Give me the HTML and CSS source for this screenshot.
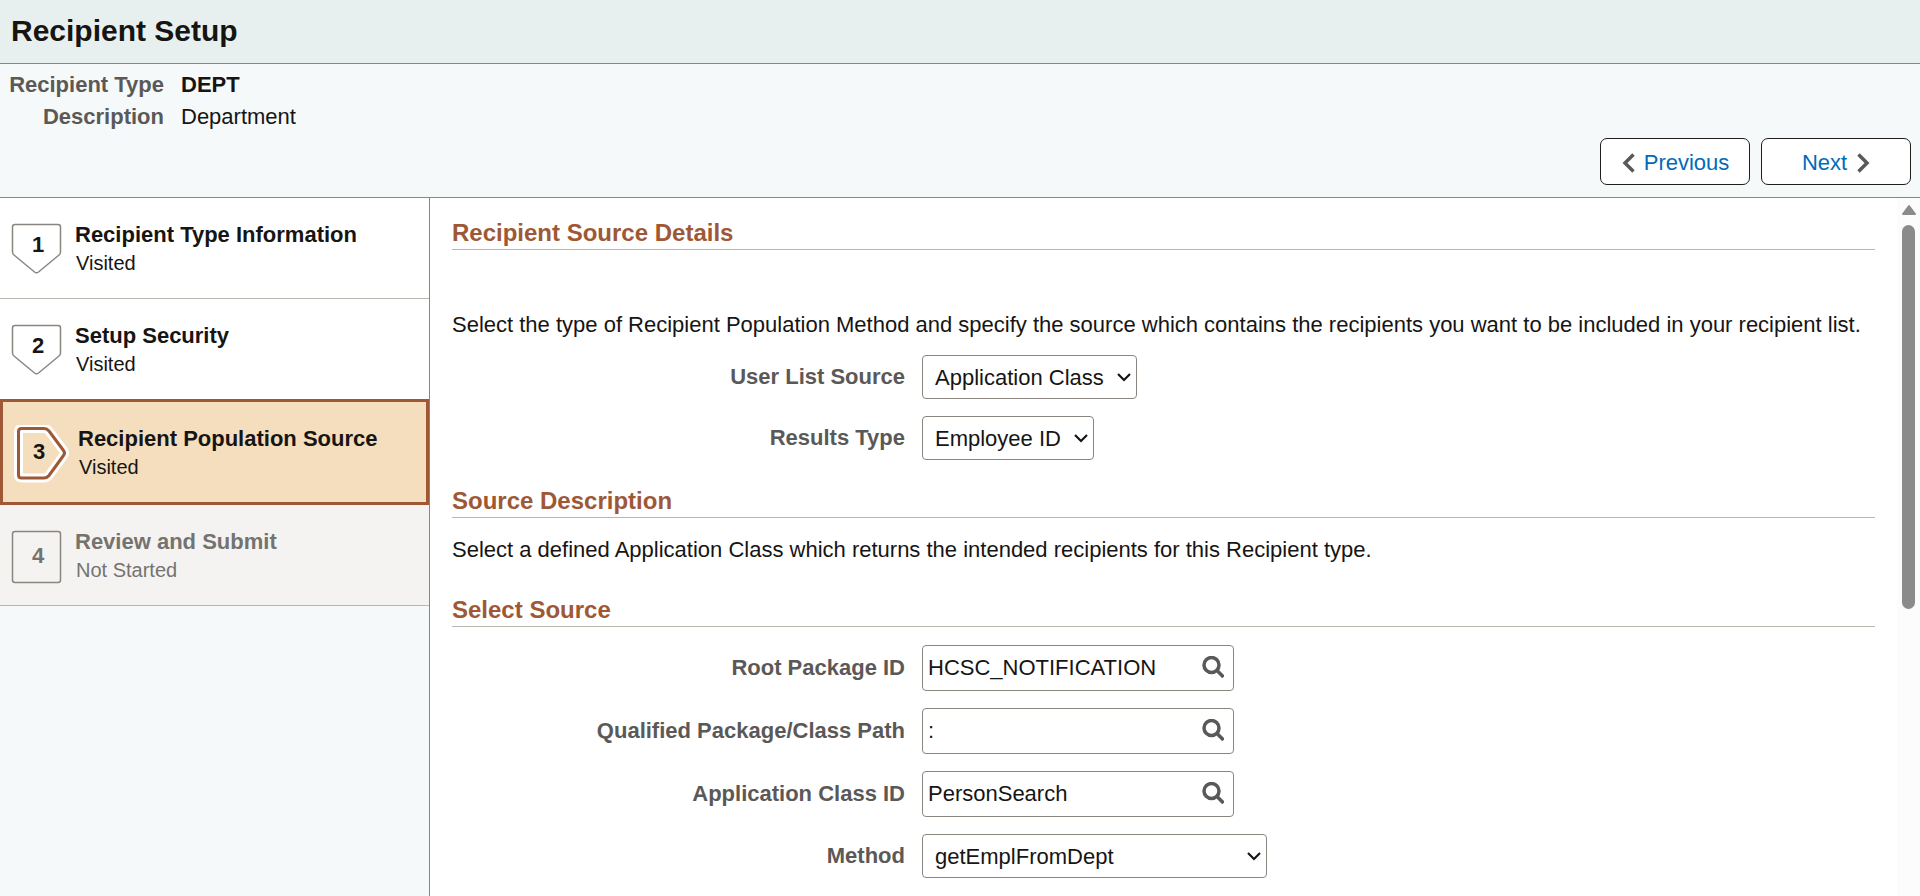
FILE: index.html
```html
<!DOCTYPE html>
<html lang="en">
<head>
    <meta charset="UTF-8">
    <meta name="viewport" content="width=device-width, initial-scale=1.0">
    <title>Recipient Setup</title>
    <link rel="stylesheet" href="styles.css">
</head>
<body>
    <header class="page-header">
        <h1>Recipient Setup</h1>
    </header>

    <section class="summary">
        <dl class="summary-list">
            <dt>Recipient Type</dt>
            <dd class="strong">DEPT</dd>
            <dt>Description</dt>
            <dd>Department</dd>
        </dl>
        <div class="nav-buttons">
            <button type="button" class="nav-button">
                <svg width="14" height="20" viewBox="0 0 14 20"><path d="M12.500 1.500L4 10l8.500 8.500"/></svg>
                Previous
            </button>
            <button type="button" class="nav-button">
                Next
                <svg width="14" height="20" viewBox="0 0 14 20"><path d="M2.500 1.500L11 10l-8.500 8.500"/></svg>
            </button>
        </div>
    </section>

    <div class="content">
        <!-- Steps -->
        <nav class="steps">
            <a href="#" class="step">
                <svg class="badge" width="60" height="60" viewBox="0 0 60 60">
                    <path d="M6 3.500H49a2.500 2.500 0 0 1 2.500 2.500V31q0 2-1.500 3L29.500 51q-2 1.500-4 0L5 34q-1.500-1-1.500-3V6A2.500 2.500 0 0 1 6 3.500z"/>
                    <text x="29" y="31">1</text>
                </svg>
                <span class="step-text">
                    <span class="step-title">Recipient Type Information</span>
                    <span class="step-status">Visited</span>
                </span>
            </a>
            <a href="#" class="step">
                <svg class="badge" width="60" height="60" viewBox="0 0 60 60">
                    <path d="M6 3.500H49a2.500 2.500 0 0 1 2.500 2.500V31q0 2-1.500 3L29.500 51q-2 1.500-4 0L5 34q-1.500-1-1.500-3V6A2.500 2.500 0 0 1 6 3.500z"/>
                    <text x="29" y="31">2</text>
                </svg>
                <span class="step-text">
                    <span class="step-title">Setup Security</span>
                    <span class="step-status">Visited</span>
                </span>
            </a>
            <a href="#" class="step active" aria-current="step">
                <svg class="badge" width="60" height="60" viewBox="0 0 60 60">
                    <path class="halo" d="M9.500 3.500H32q3 0 5 2.500L51.500 25.500q2 2.500 0 5L37 50.500q-2 2.500-5 2.500H9.500q-3 0-3-3V6.500q0-3 3-3z"/>
                    <path d="M9.500 3.500H32q3 0 5 2.500L51.500 25.500q2 2.500 0 5L37 50.500q-2 2.500-5 2.500H9.500q-3 0-3-3V6.500q0-3 3-3z"/>
                    <text x="27" y="34">3</text>
                </svg>
                <span class="step-text">
                    <span class="step-title">Recipient Population Source</span>
                    <span class="step-status">Visited</span>
                </span>
            </a>
            <a href="#" class="step pending">
                <svg class="badge" width="60" height="60" viewBox="0 0 60 60">
                    <rect x="3.500" y="3.500" width="48" height="51" rx="2.500"/>
                    <text x="29" y="35">4</text>
                </svg>
                <span class="step-text">
                    <span class="step-title">Review and Submit</span>
                    <span class="step-status">Not Started</span>
                </span>
            </a>
        </nav>

        <!-- Form -->
        <main class="details">
            <h2>Recipient Source Details</h2>
            <p class="intro">Select the type of Recipient Population Method and specify the source which contains the recipients you want to be included in your recipient list.</p>
            <div class="row">
                <label for="list-source">User List Source</label>
                <select id="list-source" class="w-class">
                    <option>Application Class</option>
                </select>
            </div>
            <div class="row">
                <label for="results-type">Results Type</label>
                <select id="results-type" class="w-type">
                    <option>Employee ID</option>
                </select>
            </div>

            <h2>Source Description</h2>
            <p>Select a defined Application Class which returns the intended recipients for this Recipient type.</p>

            <h2>Select Source</h2>
            <div class="row">
                <label for="root-package">Root Package ID</label>
                <div class="lookup">
                    <input type="text" id="root-package" value="HCSC_NOTIFICATION">
                    <button type="button" aria-label="Look up Root Package ID">
                        <svg width="22" height="22" viewBox="0 0 22 22"><circle cx="9.500" cy="9" r="7.500"/><path d="M14.500 14l7 7"/></svg>
                    </button>
                </div>
            </div>
            <div class="row">
                <label for="class-path">Qualified Package/Class Path</label>
                <div class="lookup">
                    <input type="text" id="class-path" value=":">
                    <button type="button" aria-label="Look up Class Path">
                        <svg width="22" height="22" viewBox="0 0 22 22"><circle cx="9.500" cy="9" r="7.500"/><path d="M14.500 14l7 7"/></svg>
                    </button>
                </div>
            </div>
            <div class="row">
                <label for="class-id">Application Class ID</label>
                <div class="lookup">
                    <input type="text" id="class-id" value="PersonSearch">
                    <button type="button" aria-label="Look up Application Class ID">
                        <svg width="22" height="22" viewBox="0 0 22 22"><circle cx="9.500" cy="9" r="7.500"/><path d="M14.500 14l7 7"/></svg>
                    </button>
                </div>
            </div>
            <div class="row">
                <label for="method">Method</label>
                <select id="method" class="w-method">
                    <option>getEmplFromDept</option>
                </select>
            </div>
        </main>

        <div class="scrollbar" aria-hidden="true">
            <svg width="16" height="27" viewBox="0 0 16 27"><path d="M8 8L14 16H2z"/></svg>
            <div class="thumb"></div>
        </div>
    </div>
</body>
</html>
```
FILE: styles.css
```css
* {
    box-sizing: border-box;
}
body {
    margin: 0;
    height: 100vh;
    display: flex;
    flex-direction: column;
    overflow: hidden;
    font-family: Arial, "Liberation Sans", sans-serif;
    font-size: 22px;
    line-height: 28px;
    color: #161513;
    background: #f5f9fa;
}
input, select, button {
    font: inherit;
    color: inherit;
}
.page-header {
    padding: 13px 11px 14px;
    background: #e7f0ef;
    border-bottom: 1px solid #8b8580;
}
h1 {
    margin: 0;
    font-size: 30px;
    line-height: 36px;
}

/* Summary */
.summary {
    padding: 5px 9px 12px;
    border-bottom: 1px solid #8b8580;
}
.summary-list {
    display: grid;
    grid-template-columns: 155px 1fr;
    column-gap: 17px;
    margin: 0;
    line-height: 32px;
}
.summary-list dt {
    text-align: right;
    font-weight: bold;
    color: #5b5957;
}
.summary-list dd {
    margin: 0;
}
.summary-list .strong {
    font-weight: bold;
}
.nav-buttons {
    display: flex;
    justify-content: flex-end;
    gap: 11px;
    margin-top: 5px;
}
.nav-button {
    display: flex;
    align-items: center;
    justify-content: center;
    gap: 9px;
    width: 150px;
    height: 47px;
    padding: 2px 0 0;
    color: #006bb8;
    background: #fff;
    border: 1px solid #201e1c;
    border-radius: 7px;
    cursor: pointer;
}
.nav-button path {
    fill: none;
    stroke: #5b5957;
    stroke-width: 3.5;
}

.content {
    flex: 1;
    min-height: 0;
    display: flex;
}

/* Steps */
.steps {
    width: 430px;
    flex-shrink: 0;
    border-right: 1px solid #8b8580;
}
.step {
    display: flex;
    gap: 6px;
    padding: 23px 9px 17px;
    color: inherit;
    text-decoration: none;
    background: #fff;
    border-bottom: 1px solid #bcb6b1;
}
.step-text {
    display: flex;
    flex-direction: column;
}
.step-title {
    font-weight: bold;
}
.step-status {
    padding-left: 1px;
    font-size: 20px;
}
.badge path,
.badge rect {
    fill: none;
    stroke: #8b8580;
    stroke-width: 1.5;
}
.badge text {
    font-size: 22px;
    font-weight: bold;
    text-anchor: middle;
    fill: currentColor;
}
.step.active {
    margin-top: -1px;
    background: #f4debe;
    border: 3px solid #9e5835;
}
.step.active .badge path {
    stroke: #9e5835;
    stroke-width: 3;
}
.step.active .badge .halo {
    stroke: #fff;
    stroke-width: 9;
}
.step.pending {
    color: #75736f;
    background: #f4f3f1;
}

/* Form */
.details {
    flex: 1;
    min-width: 0;
    padding: 21px 22px 0;
    overflow: hidden;
    background: #fff;
}
h2 {
    margin: 0 0 18px;
    padding-bottom: 2px;
    font-size: 24px;
    line-height: 28px;
    color: #9e5835;
    border-bottom: 1px solid #bcb6b1;
}
p {
    margin: 0;
}
.row + h2 {
    margin-top: 27px;
}
p + h2 {
    margin-top: 32px;
}
p.intro {
    margin: 61px 0 16px;
}
.row {
    display: grid;
    grid-template-columns: 453px 1fr;
    column-gap: 17px;
    align-items: center;
    margin-bottom: 17px;
}
.row label {
    text-align: right;
    font-weight: bold;
    color: #5b5957;
}
select {
    height: 44px;
    padding: 1px 12px 0;
    border: 1px solid #8b8580;
    border-radius: 4px;
    appearance: none;
    background: #fff url('data:image/svg+xml,<svg xmlns="http://www.w3.org/2000/svg" width="14" height="10"><path d="M1 2l6 6 6-6" fill="none" stroke="%23161513" stroke-width="2.2"/></svg>') no-repeat right 5px center;
}
.w-class {
    width: 215px;
}
.w-type {
    width: 172px;
}
.w-method {
    width: 345px;
}
.lookup {
    display: flex;
    align-items: center;
    width: 312px;
    height: 46px;
    border: 1px solid #8b8580;
    border-radius: 4px;
}
.lookup input {
    flex: 1;
    min-width: 0;
    padding: 0 5px;
    border: none;
    outline: none;
    background: none;
}
.lookup button {
    display: flex;
    padding: 0 9px 2px;
    border: none;
    background: none;
    cursor: pointer;
}
.lookup svg {
    fill: none;
    stroke: #5b5957;
    stroke-width: 3.5;
}

.scrollbar {
    width: 23px;
    display: flex;
    flex-direction: column;
    align-items: center;
    background: #fcfcfc;
}
.scrollbar path {
    fill: #8b8b8b;
    stroke: #8b8b8b;
    stroke-width: 2;
    stroke-linejoin: round;
}
.thumb {
    width: 13px;
    height: 55%;
    border-radius: 7px;
    background: #8b8b8b;
}
```
